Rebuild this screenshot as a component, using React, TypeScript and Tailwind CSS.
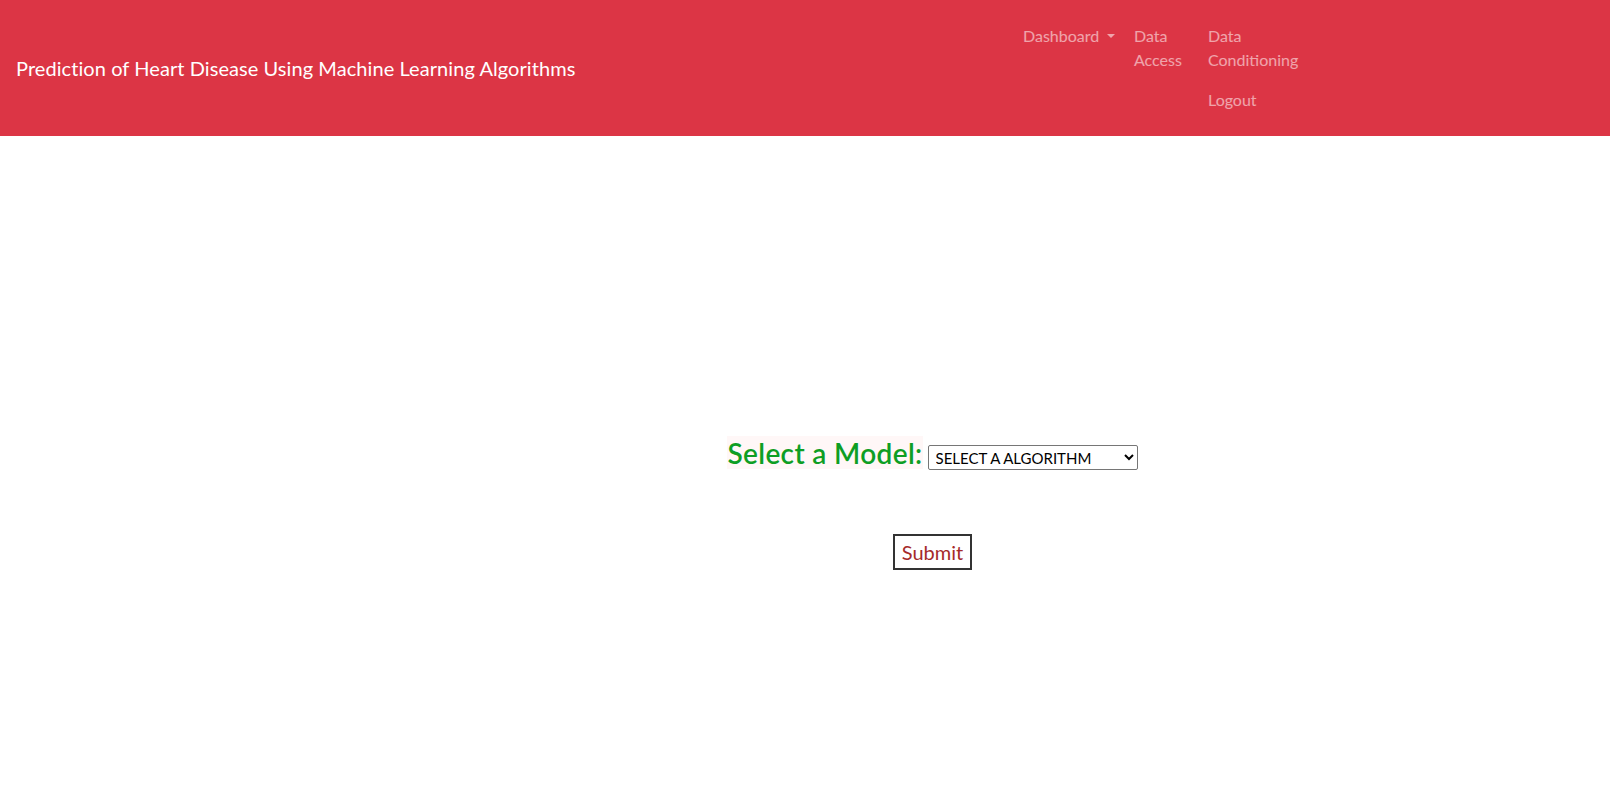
import React, { useState } from "react";

const navLink = "block px-2 py-2 text-white/55 hover:text-white/75 leading-6";

export default function App() {
  const [model, setModel] = useState("");

  return (
    <div className="min-h-screen bg-white font-['Lato','Noto_Sans',sans-serif] text-[16px]">
      {/* Navbar */}
      <header className="flex h-[136px] bg-[#dc3545]">
        <div className="flex w-[1015px] items-center pl-4">
          <a href="#" className="text-[20px] leading-[30px] tracking-[0.07px] text-white">
            Prediction of Heart Disease Using Machine Learning Algorithms
          </a>
        </div>

        <ul className="flex items-start py-4">
          <li className="w-[111px]">
            <a href="#" className={navLink}>
              Dashboard
              <span className="ml-[8px] inline-block border-x-[4px] border-t-[4px] border-x-transparent border-t-current align-[4px]" />
            </a>
          </li>
          <li className="w-[74px]">
            <a href="#" className={navLink}>
              <span className="block">Data</span>
              <span className="block">Access</span>
            </a>
          </li>
          <li className="flex flex-col">
            <a href="#" className={navLink}>
              <span className="block">Data</span>
              <span className="block">Conditioning</span>
            </a>
            <a href="#" className={navLink}>
              Logout
            </a>
          </li>
        </ul>
      </header>

      {/* Model form */}
      <main className="pl-[255px] pt-[300px]">
        <form className="flex flex-col items-center" onSubmit={(e) => e.preventDefault()}>
          <div className="flex items-end gap-[5px]">
            <label
              htmlFor="model"
              className="bg-[#fff7f7] pt-[1px] text-[28px] font-semibold leading-[32px] tracking-[0.35px] text-[#0e9e24]"
            >
              Select a Model:
            </label>
            <select
              id="model"
              value={model}
              onChange={(e) => setModel(e.target.value)}
              className="mb-[-1px] h-[25px] w-[210px] rounded-[2px] border border-[#767676] bg-white pl-[3px] text-[15px] text-black"
            >
              <option value="">SELECT A ALGORITHM</option>
              <option value="lr">LOGISTIC REGRESSION</option>
              <option value="rf">RANDOM FOREST</option>
              <option value="svm">SVM</option>
              <option value="knn">KNN</option>
            </select>
          </div>

          <button
            type="submit"
            className="mt-[65px] h-[36px] w-[79px] border-2 border-[#333] bg-white text-[20px] leading-none text-[#a52a2a]"
          >
            Submit
          </button>
        </form>
      </main>
    </div>
  );
}
